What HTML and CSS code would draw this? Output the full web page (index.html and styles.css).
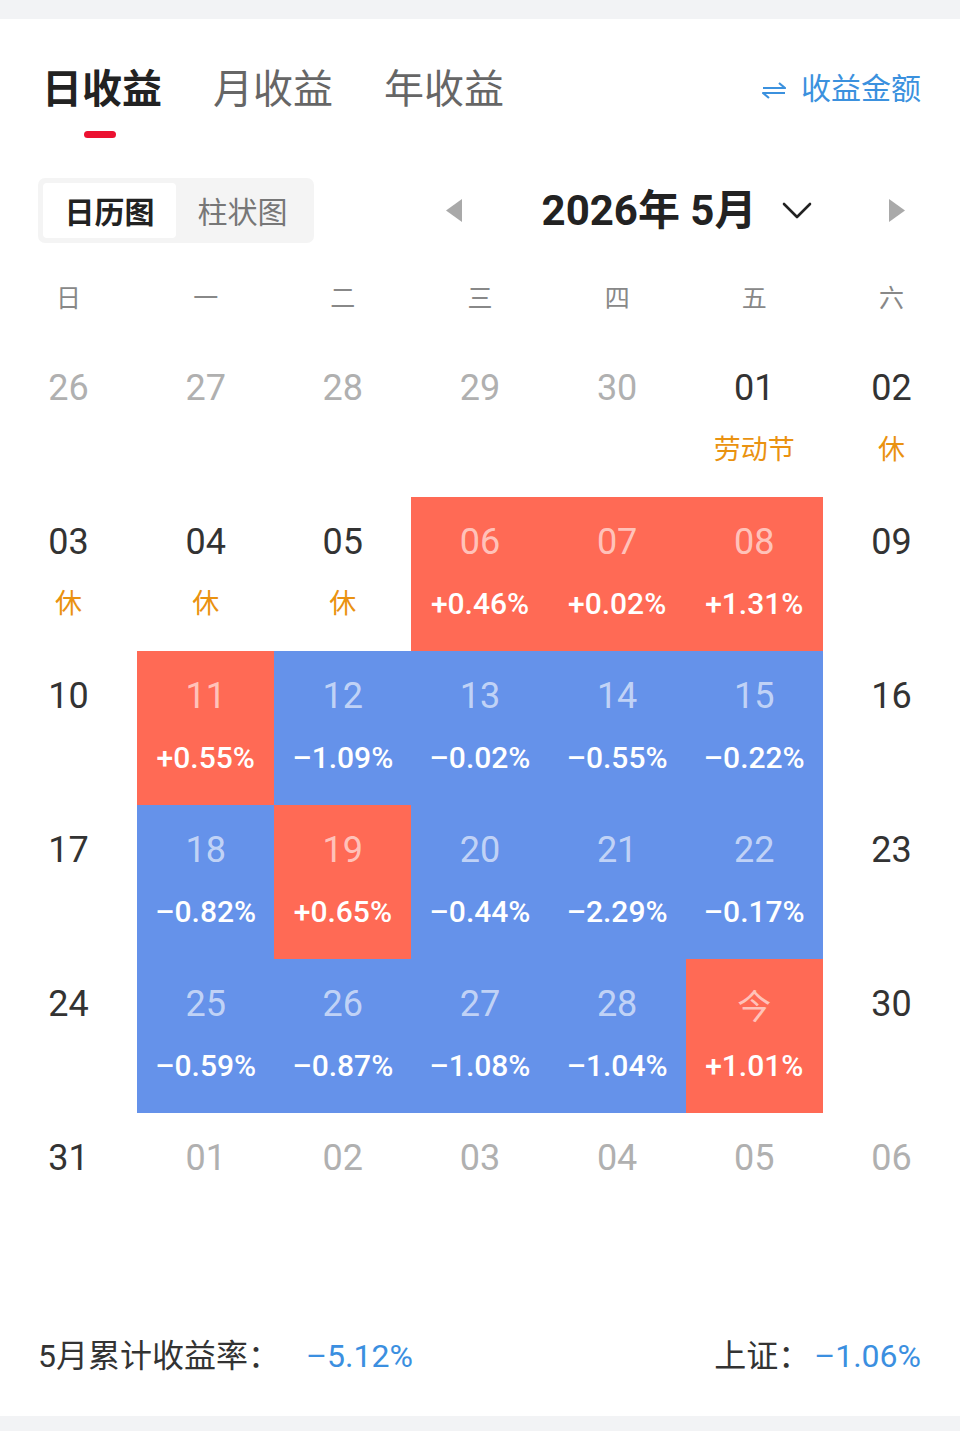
FILE: index.html
```html
<!DOCTYPE html>
<html lang="zh-CN">
<head>
    <meta http-equiv="content-type" content="text/html; charset=utf-8" />
    <title>日收益</title>
    <link rel="stylesheet" href="styles.css">
</head>
<body>
    <div class="card">
        <div class="header">
            <div class="tabs">
                <div class="tab active">日收益<span class="bar"></span></div>
                <div class="tab">月收益</div>
                <div class="tab">年收益</div>
            </div>
            <div class="switch">
                <svg class="swap" width="24" height="17" viewBox="0 0 24 17">
                    <path d="M1 6 H23 L17 1" />
                    <path d="M23 11 H1 L7 16" />
                </svg>
                收益金额
            </div>
        </div>

        <div class="toolbar">
            <div class="seg">
                <div class="seg-item on">日历图</div>
                <div class="seg-item">柱状图</div>
            </div>
            <div class="nav">
                <svg class="tri" width="16" height="23" viewBox="0 0 16 23"><polygon points="16,0 16,23 0,11.5" /></svg>
                <div class="title">
                    2026年 5月
                    <svg class="chev" width="30" height="17" viewBox="0 0 30 17"><polyline points="2,2 15,15 28,2" /></svg>
                </div>
                <svg class="tri" width="16" height="23" viewBox="0 0 16 23"><polygon points="0,0 0,23 16,11.5" /></svg>
            </div>
        </div>

        <div class="weekdays">
            <div>日</div><div>一</div><div>二</div><div>三</div><div>四</div><div>五</div><div>六</div>
        </div>

        <div class="grid">
            <div class="day muted"><span class="num">26</span></div>
            <div class="day muted"><span class="num">27</span></div>
            <div class="day muted"><span class="num">28</span></div>
            <div class="day muted"><span class="num">29</span></div>
            <div class="day muted"><span class="num">30</span></div>
            <div class="day"><span class="num">01</span><span class="tag">劳动节</span></div>
            <div class="day"><span class="num">02</span><span class="tag">休</span></div>

            <div class="day"><span class="num">03</span><span class="tag">休</span></div>
            <div class="day"><span class="num">04</span><span class="tag">休</span></div>
            <div class="day"><span class="num">05</span><span class="tag">休</span></div>
            <div class="day up"><span class="num">06</span><span class="pct">+0.46%</span></div>
            <div class="day up"><span class="num">07</span><span class="pct">+0.02%</span></div>
            <div class="day up"><span class="num">08</span><span class="pct">+1.31%</span></div>
            <div class="day"><span class="num">09</span></div>

            <div class="day"><span class="num">10</span></div>
            <div class="day up"><span class="num">11</span><span class="pct">+0.55%</span></div>
            <div class="day down"><span class="num">12</span><span class="pct">–1.09%</span></div>
            <div class="day down"><span class="num">13</span><span class="pct">–0.02%</span></div>
            <div class="day down"><span class="num">14</span><span class="pct">–0.55%</span></div>
            <div class="day down"><span class="num">15</span><span class="pct">–0.22%</span></div>
            <div class="day"><span class="num">16</span></div>

            <div class="day"><span class="num">17</span></div>
            <div class="day down"><span class="num">18</span><span class="pct">–0.82%</span></div>
            <div class="day up"><span class="num">19</span><span class="pct">+0.65%</span></div>
            <div class="day down"><span class="num">20</span><span class="pct">–0.44%</span></div>
            <div class="day down"><span class="num">21</span><span class="pct">–2.29%</span></div>
            <div class="day down"><span class="num">22</span><span class="pct">–0.17%</span></div>
            <div class="day"><span class="num">23</span></div>

            <div class="day"><span class="num">24</span></div>
            <div class="day down"><span class="num">25</span><span class="pct">–0.59%</span></div>
            <div class="day down"><span class="num">26</span><span class="pct">–0.87%</span></div>
            <div class="day down"><span class="num">27</span><span class="pct">–1.08%</span></div>
            <div class="day down"><span class="num">28</span><span class="pct">–1.04%</span></div>
            <div class="day up"><span class="num today">今</span><span class="pct">+1.01%</span></div>
            <div class="day"><span class="num">30</span></div>

            <div class="day"><span class="num">31</span></div>
            <div class="day muted"><span class="num">01</span></div>
            <div class="day muted"><span class="num">02</span></div>
            <div class="day muted"><span class="num">03</span></div>
            <div class="day muted"><span class="num">04</span></div>
            <div class="day muted"><span class="num">05</span></div>
            <div class="day muted"><span class="num">06</span></div>
        </div>

        <div class="summary">
            <div class="sum-item">5月累计收益率：<span class="val gap">–5.12%</span></div>
            <div class="sum-item">上证：<span class="val">–1.06%</span></div>
        </div>
    </div>
</body>
</html>
```

FILE: styles.css
```css
body {margin:0; min-height:100vh; background:#f2f3f5; font-family:Roboto, "Noto Sans CJK SC", sans-serif; color:#333;}
.card {margin-top:19px; background:#fff; padding-bottom:38px;}

.header {display:flex; justify-content:space-between; align-items:flex-start; padding:39px 39px 0 42px;}
.tabs {display:flex; gap:51px;}
.tab {display:flex; flex-direction:column; align-items:center; font-family:"Noto Sans CJK SC", sans-serif; font-size:40px; line-height:56px; color:#666;}
.tab.active {font-weight:bold; color:#222;}
.bar {width:32px; height:7px; margin-top:17px; margin-right:4px; border-radius:4px; background:#ec1131;}
.switch {display:flex; align-items:center; gap:15px; font-family:"Noto Sans CJK SC", sans-serif; font-size:30px; line-height:56px; color:#3b91de;}
.swap {margin-top:8px;}
.swap path {fill:none; stroke:#3b91de; stroke-width:2.2; stroke-linejoin:round;}

.toolbar {display:flex; align-items:center; margin-top:40px; padding:0 55px 0 38px;}
.seg {display:flex; padding:5px; background:#f4f4f4; border-radius:7px;}
.seg-item {width:133px; height:55px; line-height:55px; text-align:center; font-family:"Noto Sans CJK SC", sans-serif; font-size:30px; color:#777;}
.seg-item.on {background:#fff; border-radius:4px; font-weight:bold; color:#222;}
.nav {margin-left:auto; width:459px; display:flex; justify-content:space-between; align-items:center;}
.tri polygon {fill:#a9a9a9;}
.title {display:flex; align-items:center; gap:26px; font-size:42px; font-weight:bold; color:#222; line-height:60px; padding-left:3px;}
.chev polyline {fill:none; stroke:#222; stroke-width:2.6; stroke-linecap:round; stroke-linejoin:round;}

.weekdays {display:grid; grid-template-columns:repeat(7, 1fr); margin-top:28px; font-family:"Noto Sans CJK SC", sans-serif; font-size:25px; line-height:50px; color:#888; text-align:center;}

.grid {display:grid; grid-template-columns:repeat(7, 1fr); grid-auto-rows:154px; margin-top:22px;}
.day {display:flex; flex-direction:column; align-items:center; padding-top:23px; box-sizing:border-box;}
.num {font-size:36px; line-height:45px; color:#333;}
.muted .num {color:#b0b0b0;}
.tag {margin-top:17px; font-family:"Noto Sans CJK SC", sans-serif; font-size:27px; line-height:40px; color:#ea9210;}
.pct {margin-top:19px; font-size:30px; font-weight:500; line-height:40px; color:#fff;}
.up {background:#ff6a55;}
.down {background:#6592ea;}
.up .num, .down .num {color:rgba(255,255,255,0.62);}
.num.today {font-family:"Noto Sans CJK SC", sans-serif; font-size:34px;}

.summary {display:flex; justify-content:space-between; margin-top:67px; padding:0 39px 0 38px; font-family:Roboto, "Noto Sans CJK SC", sans-serif; font-size:32px; line-height:44px; color:#333;}
.val {color:#3b8fe0; margin-left:4px;}
.val.gap {margin-left:26px;}
```
